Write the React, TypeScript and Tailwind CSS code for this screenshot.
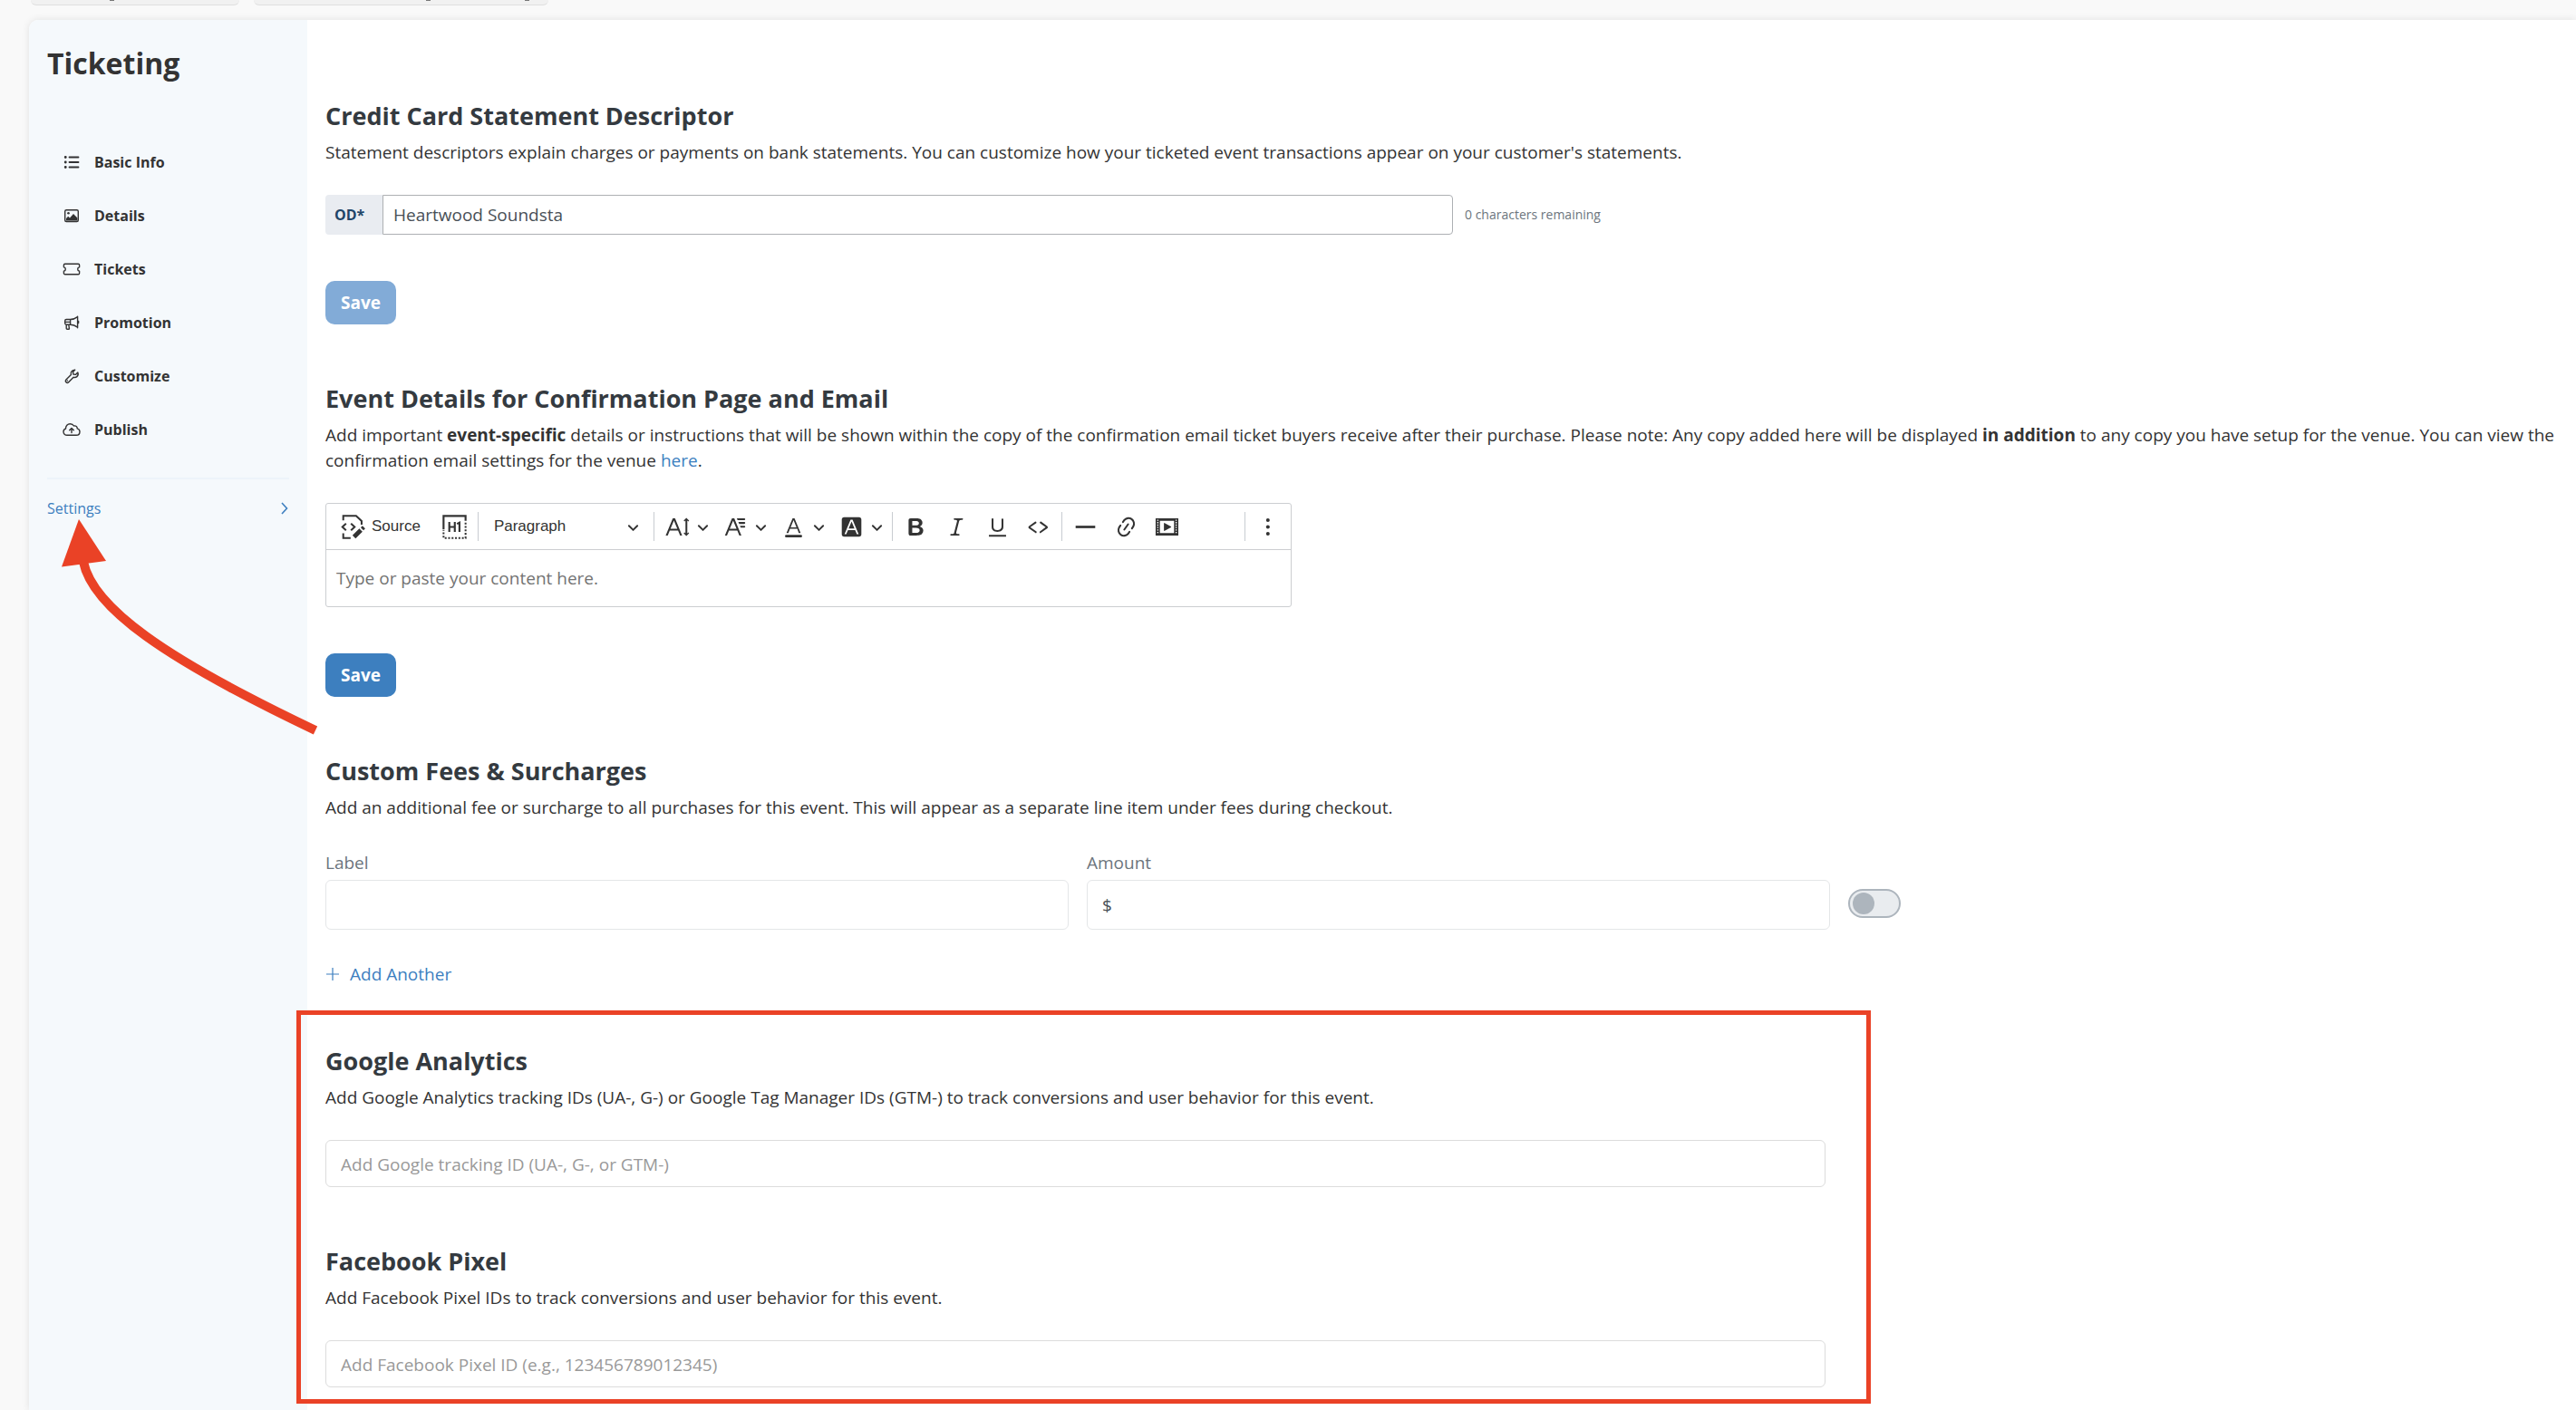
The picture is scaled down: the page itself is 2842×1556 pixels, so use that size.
import { ReactNode } from 'react';

const NAV_ITEMS = [
  { label: 'Basic Info', icon: <ListIcon /> },
  { label: 'Details', icon: <ImageIcon /> },
  { label: 'Tickets', icon: <TicketIcon /> },
  { label: 'Promotion', icon: <MegaphoneIcon /> },
  { label: 'Customize', icon: <WrenchIcon /> },
  { label: 'Publish', icon: <CloudIcon /> },
];

const FONT_TOOLS = [
  {
    label: 'Font size',
    d: 'M9.816 11.5 7.038 4.785 4.261 11.5h5.555Zm.62 1.5H3.641l-1.666 4.028H.312l5.789-14h1.875l5.789 14h-1.663L10.436 13Zm7.55 2.279.779-.779.707.707-2.265 2.265-2.193-2.265.707-.707.765.765V4.825c0-.042 0-.083.002-.123l-.77.77-.707-.707L17.207 2.5l2.265 2.265-.707.707-.782-.782c.002.043.003.089.003.135v10.454Z',
  },
  {
    label: 'Font family',
    d: 'M11.03 3h6.149a.75.75 0 1 1 0 1.5h-5.514L11.03 3zm1.27 3h4.879a.75.75 0 1 1 0 1.5h-4.244L12.3 6zm1.27 3h3.609a.75.75 0 1 1 0 1.5h-2.973L13.57 9zm-2.754 2.5L8.038 4.785 5.261 11.5h5.555zm.62 1.5H4.641l-1.666 4.028H1.312l5.789-14h1.875l5.789 14h-1.663L11.436 13z',
  },
  {
    label: 'Font color',
    d: 'M12.4 10.3 10 4.5l-2.4 5.8h4.8zm.5 1.2H7.1L5.7 15H4.2l5-12h1.6l5 12h-1.5L13 11.5zm3.1 7H4a1 1 0 0 1 0-2h12a1 1 0 0 1 0 2z',
  },
  {
    label: 'Font background color',
    d: 'M4 2h12a2 2 0 0 1 2 2v12a2 2 0 0 1-2 2H4a2 2 0 0 1-2-2V4a2 2 0 0 1 2-2zm8.38 9.262H7.62L10 5.506l2.38 5.756zm.532 1.285L14.34 16h1.426L10.804 4H9.196L4.234 16H5.66l1.428-3.453h5.824z',
  },
];

const TEXT_TOOLS = [
  {
    label: 'Bold',
    d: 'M10.187 17H5.773c-.637 0-1.092-.138-1.364-.415-.273-.277-.409-.718-.409-1.323V4.738c0-.617.14-1.062.419-1.332.279-.27.73-.406 1.354-.406h4.68c.69 0 1.288.041 1.793.124.506.083.96.242 1.36.478.341.197.644.447.906.75a3.262 3.262 0 0 1 .808 2.162c0 1.401-.722 2.426-2.167 3.075C15.05 10.175 16 11.315 16 13.01a3.756 3.756 0 0 1-2.296 3.504 6.1 6.1 0 0 1-1.517.377c-.571.073-1.238.11-2 .11zm-.217-6.217H7v4.087h3.069c1.977 0 2.965-.69 2.965-2.072 0-.707-.256-1.22-.768-1.537-.512-.319-1.277-.478-2.296-.478zM7 5.13v3.619h2.606c.729 0 1.292-.067 1.69-.2a1.6 1.6 0 0 0 .91-.765c.165-.267.247-.566.247-.897 0-.707-.26-1.176-.778-1.409-.519-.232-1.31-.348-2.375-.348H7z',
  },
  {
    label: 'Italic',
    d: 'm9.586 14.633.021.004c-.036.335.095.655.393.962.082.083.173.15.274.201h1.474a.6.6 0 1 1 0 1.2H5.304a.6.6 0 0 1 0-1.2h1.15c.474-.07.809-.182 1.005-.334.157-.122.291-.32.404-.597l2.416-9.55a1.053 1.053 0 0 0-.281-.823 1.12 1.12 0 0 0-.442-.296H8.15a.6.6 0 0 1 0-1.2h6.443a.6.6 0 1 1 0 1.2h-1.195c-.376.056-.65.155-.823.296-.215.175-.423.439-.623.79l-2.366 9.347z',
  },
  {
    label: 'Underline',
    d: 'M3 18v-1.5h14V18zm2.2-8V3.6c0-.4.4-.6.8-.6.3 0 .7.2.7.6v6.2c0 2 1.3 2.8 3.2 2.8 1.9 0 3.4-.9 3.4-2.9V3.6c0-.3.4-.5.8-.5.3 0 .7.2.7.5V10c0 2.7-2.2 4-4.9 4-2.6 0-4.7-1.2-4.7-4z',
  },
  {
    label: 'Code',
    d: 'm12.5 5.7 5.2 3.9v1.3l-5.6 4c-.1.2-.3.2-.5.2-.3-.1-.6-.7-.6-1l.3-.4 4.7-3.5L11.5 7l-.2-.2c-.1-.3-.1-.6 0-.8.2-.2.5-.4.8-.4a.8.8 0 0 1 .4.1zm-5.2 0L2 9.6v1.3l5.6 4c.1.2.3.2.5.2.3-.1.7-.7.6-1 0-.1 0-.3-.2-.4l-5-3.5L8.2 7l.2-.2c.1-.3.1-.6 0-.8-.2-.2-.5-.4-.8-.4a.8.8 0 0 0-.3.1z',
  },
];

const INSERT_TOOLS = [
  { label: 'Horizontal line', d: 'M2 9h16v2H2z' },
  {
    label: 'Link',
    d: 'm11.077 15 .991-1.416a.75.75 0 1 1 1.229.86l-1.148 1.64a.748.748 0 0 1-.217.206 5.251 5.251 0 0 1-8.503-5.955.741.741 0 0 1 .12-.274l1.147-1.639a.75.75 0 1 1 1.228.86L4.933 10.7l.006.003a3.75 3.75 0 0 0 6.132 4.294l.006.004zm5.494-5.335a.748.748 0 0 1-.12.274l-1.147 1.639a.75.75 0 1 1-1.228-.86l.86-1.23a3.75 3.75 0 0 0-6.144-4.301l-.86 1.229a.75.75 0 0 1-1.229-.86l1.148-1.64a.748.748 0 0 1 .217-.206 5.251 5.251 0 0 1 8.503 5.955zm-4.563-2.532a.75.75 0 0 1 .184 1.045l-3.155 4.505a.75.75 0 1 1-1.229-.86l3.155-4.506a.75.75 0 0 1 1.045-.184z',
  },
  {
    label: 'Insert media',
    d: 'M18.68 3.03c.6 0 .59-.03.59.55v12.84c0 .59.01.56-.59.56H1.29c-.6 0-.59.03-.59-.56V3.58c0-.58-.01-.55.6-.55h17.38zM15.77 15V5H4.2v10h11.57zM2 4v1h1V4H2zm0 2v1h1V6H2zm0 2v1h1V8H2zm0 2v1h1v-1H2zm0 2v1h1v-1H2zm0 2v1h1v-1H2zM17 4v1h1V4h-1zm0 2v1h1V6h-1zm0 2v1h1V8h-1zm0 2v1h1v-1h-1zm0 2v1h1v-1h-1zm0 2v1h1v-1h-1zM7.5 7.177a.4.4 0 0 1 .593-.351l5.133 2.824a.4.4 0 0 1 0 .7l-5.133 2.824a.4.4 0 0 1-.593-.35V7.176v.001z',
  },
];

function NavIcon({ children }: { children: ReactNode }) {
  return (
    <svg
      viewBox="0 0 20 20"
      className="w-5 h-5 flex-shrink-0"
      fill="none"
      stroke="currentColor"
      strokeWidth="1.4"
      strokeLinecap="round"
      strokeLinejoin="round"
      aria-hidden="true"
    >
      {children}
    </svg>
  );
}

function ListIcon() {
  return (
    <NavIcon>
      <path d="M7.5 4.5h10M7.5 10h10M7.5 15.5h10" strokeWidth="1.8" />
      <path d="M3.2 4.5h.1M3.2 10h.1M3.2 15.5h.1" strokeWidth="2.8" />
    </NavIcon>
  );
}

function ImageIcon() {
  return (
    <NavIcon>
      <rect x="2.7" y="3.7" width="14.6" height="12.8" rx="1.5" />
      <circle cx="6.5" cy="7.3" r="1.3" fill="currentColor" stroke="none" />
      <path d="M4 15.5v-2.6l2.2-2.2 1.8 1.8 4-4.6 4.4 4.6v3z" fill="currentColor" stroke="none" />
    </NavIcon>
  );
}

function TicketIcon() {
  return (
    <NavIcon>
      <path d="M2.6 4.3h14.8c.7 0 1.2.5 1.2 1.2v2.2c-1.3.2-1.9 1.1-1.9 2.3s.6 2.1 1.9 2.3v2.2c0 .7-.5 1.2-1.2 1.2H2.6c-.7 0-1.2-.5-1.2-1.2v-2.2c1.3-.2 1.9-1.1 1.9-2.3s-.6-2.1-1.9-2.3V5.500c0-.7.5-1.200 1.200-1.200z" />
    </NavIcon>
  );
}

function MegaphoneIcon() {
  return (
    <NavIcon>
      <path d="M16.6 3.2v12.6M16.6 3.6C14 5.6 11.4 6.5 8.6 6.5H4.2c-.9 0-1.5.6-1.5 1.4v2.9c0 .8.6 1.4 1.5 1.4h4.4c2.8 0 5.4.9 8 2.9M8.6 6.5v5.7M4.2 12.2v4.1c0 .5.4.9.9.9h1.5c.6 0 .9-.4.8-.9l-.6-4M2.7 9.4h5.9M17.6 8.4v2.2" />
    </NavIcon>
  );
}

function WrenchIcon() {
  return (
    <NavIcon>
      <path d="M13.8 3.1l-2.3 2.3.3 2.6 2.6.4 2.4-2.4c.8 2 .3 3.6-.9 4.6-1.1.9-2.5 1.1-3.8.7l-5.4 5.5c-.8.8-2 .8-2.8 0s-.8-2 0-2.8l5.5-5.4c-.5-1.5-.1-3 .9-4 1-.9 2.2-1.3 3.5-1.5z" />
      <path d="M5.2 15h.1" strokeWidth="1.6" />
    </NavIcon>
  );
}

function CloudIcon() {
  return (
    <NavIcon>
      <path d="M5 16.3c-2.3 0-4-1.6-4-3.8 0-1.7 1-3 2.5-3.5-.1-3 2-5.3 4.9-5.3 1.9 0 3.3.9 4.1 2.3 2.1-.6 3.9.8 3.7 2.9 1.7.5 2.8 1.8 2.8 3.6 0 2.2-1.7 3.8-3.9 3.8z" />
      <path d="M10 13.6V8.7M7.7 10.8 10 8.5l2.3 2.3" />
    </NavIcon>
  );
}

function ToolIcon({ d }: { d: string }) {
  return (
    <svg viewBox="0 0 20 20" className="w-[27px] h-[27px]" fill="currentColor" fillRule="evenodd" aria-hidden="true">
      <path d={d} />
    </svg>
  );
}

function ToolArrow() {
  return (
    <svg viewBox="0 0 10 10" className="w-[13px] h-[13px]" fill="currentColor" aria-hidden="true">
      <path d="M.941 4.523a.75.75 0 1 1 1.06-1.06l3.006 3.005 3.005-3.005a.75.75 0 1 1 1.06 1.06l-3.549 3.55a.75.75 0 0 1-1.168-.136L.941 4.523z" />
    </svg>
  );
}

function Separator() {
  return <span className="w-px h-8 bg-[#c8ccd1]" />;
}

function EditorToolbar() {
  return (
    <div className="flex items-center h-[51px] border-b border-[#ccced1] pl-4 pr-[11px] text-[#333]">
      <button className="flex items-center gap-[7px] font-['Liberation_Sans',Arial,sans-serif] text-[17px]">
        <svg viewBox="0 0 20 20" className="w-[27px] h-[27px]" fill="none" stroke="currentColor" aria-hidden="true">
          <path d="M2 4.6V1h10.5l4.5 4.2v3M2 15.2V19h6" strokeWidth="1.5" />
          <path d="M4.3 7.2 1.3 10l3 2.8M8.3 7.2l3 2.8-3 2.8" strokeWidth="1.5" />
          <path d="m10.8 18.2 5.6-5.6" strokeWidth="3.6" />
          <path d="m17.4 11.6 1.4-1.4" strokeWidth="3.2" />
        </svg>
        Source
      </button>
      <button aria-label="Show blocks" className="ml-6">
        <svg viewBox="0 0 20 20" className="w-[27px] h-[27px]" fill="none" stroke="currentColor" aria-hidden="true">
          <path d="M1 12V1h18v4" strokeWidth="1.6" />
          <path d="M19 6.5V19H1v-6.5" strokeWidth="1.5" strokeDasharray="1.5 1.3" />
          <path d="M5.7 6v8M10.2 6v8M5.7 10h4.5M12 7.5l2-1V14" strokeWidth="1.6" />
        </svg>
      </button>
      <span className="ml-3 mr-[17px] flex">
        <Separator />
      </span>
      <div className="relative flex items-center">
        <select
          aria-label="Heading"
          className="appearance-none w-40 font-['Liberation_Sans',Arial,sans-serif] text-[17px] outline-none"
        >
          <option>Paragraph</option>
        </select>
        <span className="absolute right-0 pointer-events-none">
          <ToolArrow />
        </span>
      </div>
      <span className="ml-4 mr-3 flex">
        <Separator />
      </span>
      <div className="flex gap-4">
        {FONT_TOOLS.map((tool) => (
          <button key={tool.label} aria-label={tool.label} className="flex items-center gap-2">
            <ToolIcon d={tool.d} />
            <ToolArrow />
          </button>
        ))}
      </div>
      <span className="ml-[10px] mr-3 flex">
        <Separator />
      </span>
      <div className="flex gap-[18px]">
        {TEXT_TOOLS.map((tool) => (
          <button key={tool.label} aria-label={tool.label}>
            <ToolIcon d={tool.d} />
          </button>
        ))}
      </div>
      <span className="mx-3 flex">
        <Separator />
      </span>
      <div className="flex gap-[18px]">
        {INSERT_TOOLS.map((tool) => (
          <button key={tool.label} aria-label={tool.label}>
            <ToolIcon d={tool.d} />
          </button>
        ))}
      </div>
      <span className="ml-auto mr-3 flex">
        <Separator />
      </span>
      <button aria-label="Show more items">
        <svg viewBox="0 0 20 20" className="w-[27px] h-[27px]" fill="currentColor" aria-hidden="true">
          <circle cx="9.5" cy="4.5" r="1.5" />
          <circle cx="9.5" cy="10" r="1.5" />
          <circle cx="9.5" cy="15.5" r="1.5" />
        </svg>
      </button>
    </div>
  );
}

function Section({ title, text, children }: { title: string; text: ReactNode; children: ReactNode }) {
  return (
    <section>
      <h2 className="text-[27px] leading-9 font-bold text-[#343a40]">{title}</h2>
      <p className="mt-2">{text}</p>
      {children}
    </section>
  );
}

function SaveButton({ disabled = false }: { disabled?: boolean }) {
  return (
    <button
      disabled={disabled}
      className="block mt-[51px] h-12 px-[17px] rounded-[10px] bg-[#3d7fbf] font-bold text-white disabled:bg-[#82abd7]"
    >
      Save
    </button>
  );
}

function Sidebar() {
  return (
    <aside className="w-[307px] flex-shrink-0 bg-[#f5f9fc] rounded-tl-[10px] px-5 pt-7 text-base text-[#333]">
      <h1 className="text-[32px] leading-10 font-bold">Ticketing</h1>
      <nav>
        <ul className="mt-[77px] pl-[17px] flex flex-col gap-[35px]">
          {NAV_ITEMS.map((item) => (
            <li key={item.label}>
              <a href="#" className="flex items-center gap-[15px] font-bold">
                {item.icon}
                {item.label}
              </a>
            </li>
          ))}
        </ul>
        <hr className="mt-[41px] border-t-2 border-[#edf4fa]" />
        <a href="#" className="mt-5 flex items-center justify-between text-[#3d7fbf]">
          Settings
          <svg viewBox="0 0 10 16" className="w-[10px] h-4" fill="none" stroke="currentColor" strokeWidth="1.6" aria-hidden="true">
            <path d="m2 2 5.5 6L2 14" />
          </svg>
        </a>
      </nav>
    </aside>
  );
}

export default function App() {
  return (
    <div className="relative min-h-screen flex flex-col overflow-x-hidden bg-[#f9f9f9] font-['Open_Sans',sans-serif] text-[19px] leading-7 text-[#333]">
      {/* Bottom edge of the filter pills */}
      <div className="h-[22px] flex items-start gap-4 pl-[34px]">
        <div className="w-[230px] h-[6px] pl-[87px] rounded-b-2xl border-b border-[#dfdfdf] bg-[#f1f1f1]">
          <span className="block w-[5px] h-px bg-[#777]" />
        </div>
        <div className="w-[325px] h-[6px] pl-[190px] flex gap-[104px] rounded-b-2xl border-b border-[#dfdfdf] bg-[#f1f1f1]">
          <span className="block w-[5px] h-px bg-[#777]" />
          <span className="block w-[5px] h-px bg-[#777]" />
        </div>
      </div>

      <div className="flex-1 flex ml-8 rounded-tl-[10px] bg-white shadow-[0_0_8px_rgba(0,0,0,0.1)]">
        <Sidebar />

        <main className="flex-1 min-w-0 pl-5 pt-[88px] pb-[25px] flex flex-col gap-16">
          <Section
            title="Credit Card Statement Descriptor"
            text="Statement descriptors explain charges or payments on bank statements. You can customize how your ticketed event transactions appear on your customer's statements."
          >
            <div className="mt-[33px] flex items-center gap-[13px]">
              <div className="flex w-[1244px] h-11">
                <label
                  htmlFor="descriptor"
                  className="w-[63px] flex items-center pl-[10px] rounded-l bg-[#e9ecf1] text-base font-bold text-[#1f4568]"
                >
                  OD*
                </label>
                <input
                  id="descriptor"
                  defaultValue="Heartwood Soundsta"
                  className="flex-1 min-w-0 px-[11px] rounded-r border border-[#adb0b3] bg-white text-[#495057]"
                />
              </div>
              <span className="text-sm text-[#6c757d]">0 characters remaining</span>
            </div>
            <SaveButton disabled />
          </Section>

          <Section
            title="Event Details for Confirmation Page and Email"
            text={
              <>
                Add important <strong>event-specific</strong> details or instructions that will be shown within the copy
                of the confirmation email ticket buyers receive after their purchase. Please note: Any copy added here
                will be displayed <strong>in addition</strong> to any copy you have setup for the venue. You can view
                the confirmation email settings for the venue{' '}
                <a href="#" className="text-[#3d7fbf]">
                  here
                </a>
                .
              </>
            }
          >
            <div className="mt-[33px] w-[1066px] rounded-[3px] border border-[#ccced1]">
              <EditorToolbar />
              <textarea
                aria-label="Event details"
                rows={1}
                placeholder="Type or paste your content here."
                className="block w-full h-[62px] px-[11px] pt-[17px] resize-none outline-none placeholder:text-[#737373]"
              />
            </div>
            <SaveButton />
          </Section>

          <Section
            title="Custom Fees & Surcharges"
            text="Add an additional fee or surcharge to all purchases for this event. This will appear as a separate line item under fees during checkout."
          >
            <div className="mt-[33px] flex items-end gap-5 text-[#6c757d]">
              <div className="w-[820px]">
                <label htmlFor="fee-label">Label</label>
                <input
                  id="fee-label"
                  className="block mt-[5px] w-full h-[55px] px-4 rounded-md border border-[#e4e6e8] text-[#495057]"
                />
              </div>
              <div className="w-[820px]">
                <label htmlFor="fee-amount">Amount</label>
                <input
                  id="fee-amount"
                  defaultValue="$"
                  className="block mt-[5px] w-full h-[55px] px-4 rounded-md border border-[#e4e6e8] text-[#495057]"
                />
              </div>
              <input
                type="checkbox"
                role="switch"
                aria-label="Enable fee"
                className="appearance-none flex items-center w-[58px] h-8 mb-[13px] pl-[3px] rounded-full border-2 border-[#adb5bd] bg-[#e9ecef] before:block before:w-6 before:h-6 before:rounded-full before:bg-[#adb5bd]"
              />
            </div>
            <button className="mt-[35px] flex items-center gap-[11px] text-[#3d7fbf]">
              <svg viewBox="0 0 16 16" className="w-4 h-4" fill="none" stroke="currentColor" strokeWidth="1.2" aria-hidden="true">
                <path d="M8 1v14M1 8h14" />
              </svg>
              Add Another
            </button>
          </Section>

          <div className="relative w-2/3 flex flex-col gap-16">
            <Section
              title="Google Analytics"
              text="Add Google Analytics tracking IDs (UA-, G-) or Google Tag Manager IDs (GTM-) to track conversions and user behavior for this event."
            >
              <input
                aria-label="Google tracking ID"
                placeholder="Add Google tracking ID (UA-, G-, or GTM-)"
                className="block mt-[33px] w-full h-[52px] px-4 pt-[2px] rounded-md border border-[#dcdcdc] placeholder:text-[#999]"
              />
            </Section>
            <Section
              title="Facebook Pixel"
              text="Add Facebook Pixel IDs to track conversions and user behavior for this event."
            >
              <input
                aria-label="Facebook Pixel ID"
                placeholder="Add Facebook Pixel ID (e.g., 123456789012345)"
                className="block mt-[33px] w-full h-[52px] px-4 pt-[2px] rounded-md border border-[#dcdcdc] placeholder:text-[#999]"
              />
            </Section>
            {/* Highlight around the tracking settings */}
            <div className="absolute -top-[38px] -bottom-[18px] -left-8 -right-[50px] border-[5px] border-[#ea4226] pointer-events-none" />
          </div>
        </main>
      </div>

      {/* Arrow pointing at Settings */}
      <svg
        viewBox="0 0 300 250"
        className="absolute left-[60px] top-[570px] w-[300px] h-[250px] pointer-events-none"
        fill="none"
        aria-hidden="true"
      >
        <path d="M32 50C42 100 120 156 288 236" stroke="#ea4226" strokeWidth="10" />
        <path d="M27 3 57 49 8 55.5z" fill="#ea4226" />
      </svg>
    </div>
  );
}
